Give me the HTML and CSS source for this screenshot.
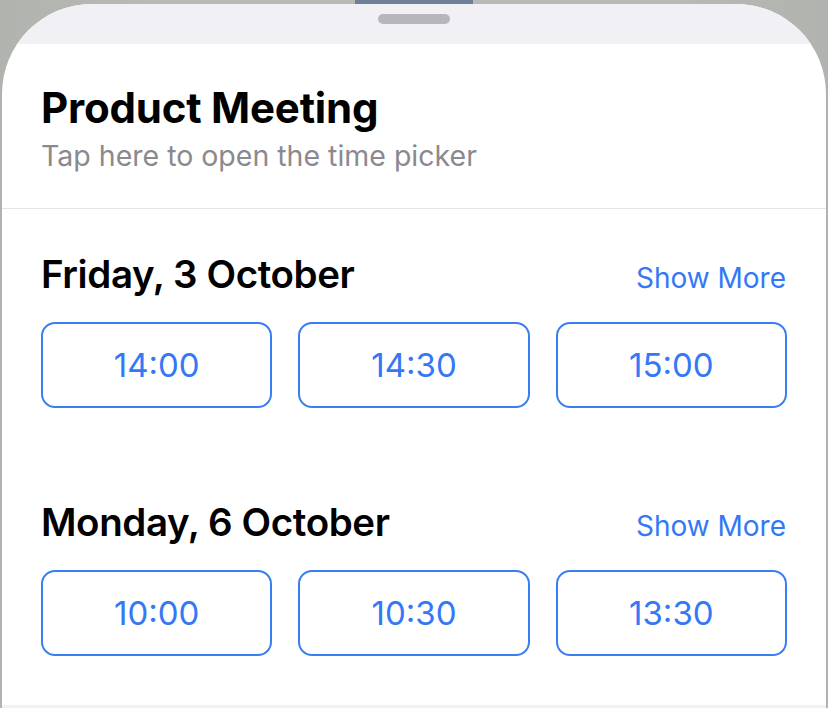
FILE: index.html
```html
<!DOCTYPE html>
<html>
<head>
<meta charset="utf-8">
<link rel="stylesheet" href="styles.css">
</head>
<body>
<div class="backdrop-tab"></div>
<div class="sheet">
  <div class="sheet-top"><div class="grabber"></div></div>
  <header class="meeting">
    <h1 class="meeting-title">Product Meeting</h1>
    <p class="meeting-hint">Tap here to open the time picker</p>
  </header>
  <section class="day">
    <div class="day-head">
      <h2 class="day-title">Friday, 3 October</h2>
      <a class="more">Show More</a>
    </div>
    <div class="slots">
      <button class="slot">14:00</button>
      <button class="slot">14:30</button>
      <button class="slot">15:00</button>
    </div>
  </section>
  <section class="day">
    <div class="day-head">
      <h2 class="day-title">Monday, 6 October</h2>
      <a class="more">Show More</a>
    </div>
    <div class="slots">
      <button class="slot">10:00</button>
      <button class="slot">10:30</button>
      <button class="slot">13:30</button>
    </div>
  </section>
  <div class="sheet-bottom"></div>
</div>
</body>
</html>
```
FILE: styles.css
```css
html, body {
  margin: 0;
  padding: 0;
  height: 100%;
  overflow: hidden;
}
body {
  background: linear-gradient(90deg, #b0b3ae 0%, #b8bab6 20%, #b8bab6 80%, #b0b3ae 100%);
  font-family: Inter, "Noto Sans", "Liberation Sans", sans-serif;
  position: relative;
}
.backdrop-tab {
  position: absolute;
  top: 0;
  left: 355px;
  width: 118px;
  height: 10px;
  background: #6d8097;
}
.sheet {
  position: relative;
  margin: 4px 2px 0 2px;
  background: #fff;
  border-radius: 90px 90px 0 0;
  overflow: hidden;
  height: 704px;
  display: flex;
  flex-direction: column;
}
.sheet-top {
  height: 40px;
  background: #f1f0f5;
  display: flex;
  justify-content: center;
  padding-top: 10px;
  box-sizing: border-box;
}
.grabber {
  width: 72px;
  height: 10px;
  border-radius: 5px;
  background: #b6b6bb;
}
.meeting {
  padding: 40px 39px 0 39px;
  height: 165px;
  box-sizing: border-box;
  border-bottom: 1.5px solid #e4e4e6;
}
.meeting-title {
  margin: 0;
  font-size: 42px;
  font-weight: 700;
  line-height: 48px;
  color: #000;
  letter-spacing: -0.2px;
}
.meeting-hint {
  margin: 6px 0 0 0;
  font-size: 28.5px;
  line-height: 36px;
  color: #8a8a8e;
  font-weight: 400;
}
.day {
  padding: 0 39px;
  display: flex;
  flex-direction: column;
}
.day-head {
  display: flex;
  justify-content: space-between;
  align-items: baseline;
  padding-top: 43px;
  height: 113px;
  box-sizing: border-box;
}
.day-title {
  margin: 0;
  font-size: 38.5px;
  font-weight: 600;
  line-height: 44px;
  color: #000;
  letter-spacing: -0.4px;
}
.more {
  font-size: 28px;
  color: #3478f6;
  line-height: 36px;
  margin-right: 1px;
}
.slots {
  display: grid;
  grid-template-columns: repeat(3, 1fr);
  gap: 26px;
  height: 135px;
  align-content: start;
}
.slot {
  height: 86px;
  border: 2px solid #3a7ff2;
  border-radius: 14px;
  background: #fff;
  color: #3478f6;
  font-family: inherit;
  font-size: 33px;
  font-weight: 400;
  padding: 0;
}
.sheet-bottom {
  flex: 1;
  background: #f1f0f5;
}
```
